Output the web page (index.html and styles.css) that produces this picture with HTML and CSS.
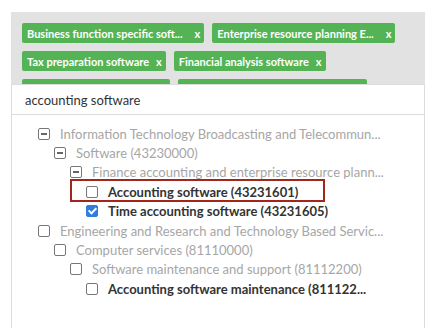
FILE: index.html
```html
<!DOCTYPE html>
<html lang="en">

<head>
  <meta charset="UTF-8">
  <meta name="viewport" content="width=device-width, initial-scale=1.0">
  <title>Category picker</title>
  <link rel="stylesheet" href="styles.css">
</head>

<body>
  <div class="picker">
    <div class="tags">
      <span class="tag cut"><span class="tag-label">Business function specific soft...</span><span class="tag-x">x</span></span>
      <span class="tag cut"><span class="tag-label">Enterprise resource planning E...</span><span class="tag-x">x</span></span>
      <span class="tag"><span class="tag-label">Tax preparation software</span><span class="tag-x">x</span></span>
      <span class="tag"><span class="tag-label">Financial analysis software</span><span class="tag-x">x</span></span>
      <span class="tag"><span class="tag-label">Time accounting software</span><span class="tag-x">x</span></span>
      <span class="tag"><span class="tag-label">Accounting software maintenance</span><span class="tag-x">x</span></span>
    </div>

    <div class="dropdown">
      <div class="search">accounting software</div>
      <ul class="tree">
        <li class="node lvl0"><span class="box partial"></span><span class="label">Information Technology Broadcasting and Telecommun...</span></li>
        <li class="node lvl1"><span class="box partial"></span><span class="label">Software (43230000)</span></li>
        <li class="node lvl2"><span class="box partial"></span><span class="label">Finance accounting and enterprise resource plann...</span></li>
        <li class="node lvl3 match"><span class="box"></span><span class="label">Accounting software (43231601)</span></li>
        <li class="node lvl3 match"><span class="box checked"></span><span class="label">Time accounting software (43231605)</span></li>
        <li class="node lvl0"><span class="box"></span><span class="label">Engineering and Research and Technology Based Servic...</span></li>
        <li class="node lvl1"><span class="box"></span><span class="label">Computer services (81110000)</span></li>
        <li class="node lvl2"><span class="box"></span><span class="label">Software maintenance and support (81112200)</span></li>
        <li class="node lvl3 match"><span class="box"></span><span class="label">Accounting software maintenance (811122...</span></li>
      </ul>
      <!-- red annotation box around the first match -->
      <div class="highlight"></div>
    </div>
  </div>
</body>

</html>
```

FILE: styles.css
```css
/* Base styles */
body {
  font-family: Lato, "Open Sans", sans-serif;
  margin: 0;
  background: #fff;
}

.picker {
  display: flex;
  flex-direction: column;
  margin: 12px 0 0 11px;
  width: 414px;
  height: 316px;
  background: #e2e2e2;
}

/* tag list is cut off where the dropdown opens */
.tags {
  display: flex;
  flex-wrap: wrap;
  align-content: flex-start;
  gap: 8px 8px;
  height: 61px;
  padding: 11px 11px 0;
  overflow: hidden;
}

.tag {
  display: flex;
  align-items: center;
  height: 20px;
  padding: 0 4px 0 5px;
  background: #54b354;
  border-radius: 2px;
  color: #fff;
  font-size: 11px;
  font-weight: bold;
  white-space: nowrap;
}

.tag-x {
  margin-left: 7px;
}

/* truncated labels keep a little more room before the x */
.tag.cut .tag-x {
  margin-left: 12px;
}

/* Dropdown */
.dropdown {
  position: relative;
  flex: 1;
  background: #fff;
  border: 1px solid #dcdcdc;
  border-bottom: 0;
}

.search {
  height: 29px;
  padding-left: 13px;
  line-height: 30px;
  font-size: 13px;
  color: #333;
  border-bottom: 1px solid #dcdcdc;
}

.tree {
  list-style: none;
  margin: 0;
  padding: 9px 0 0 26px;
}

.node {
  display: flex;
  align-items: center;
  height: 19.4px;
  font-size: 13px;
  color: #a6a6a6;
  white-space: nowrap;
}

.lvl1 { padding-left: 16px; }
.lvl2 { padding-left: 32px; }
.lvl3 { padding-left: 48px; }

.match {
  color: #333;
  font-weight: bold;
}

.box {
  position: relative;
  flex: none;
  width: 10px;
  height: 10px;
  margin-right: 10px;
  border: 1px solid #777;
  border-radius: 2px;
  background: #fff;
}

.box.partial::after {
  content: "";
  position: absolute;
  left: 2px;
  right: 2px;
  top: 4px;
  height: 2px;
  background: #666;
}

.box.checked {
  border-color: #2f7de1;
  background: #2f7de1;
}

.box.checked::after {
  content: "";
  position: absolute;
  left: 3px;
  top: 0;
  width: 3px;
  height: 6px;
  border: solid #fff;
  border-width: 0 2px 2px 0;
  transform: rotate(45deg);
}

.highlight {
  position: absolute;
  left: 58px;
  top: 94px;
  width: 251px;
  height: 19px;
  border: 2px solid #a3261c;
}
```
